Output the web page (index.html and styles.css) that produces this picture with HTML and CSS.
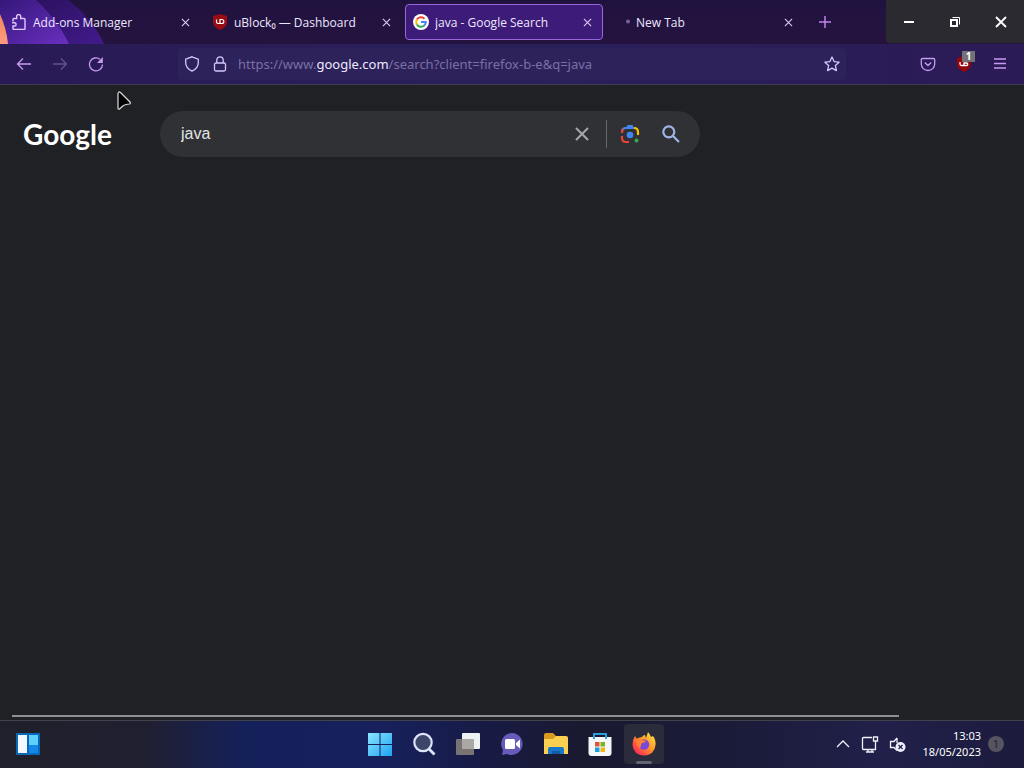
FILE: index.html
```html
<!DOCTYPE html>
<html lang="en">
<head>
<meta charset="utf-8">
<meta name="viewport" content="width=device-width, initial-scale=1">
<title>java - Google Search</title>
<link rel="stylesheet" href="styles.css">
</head>
<body>
<div class="desktop">
  <header class="tabbar">
    <svg class="theme-art" viewBox="0 0 110 44" aria-hidden="true">
      <defs>
        <linearGradient id="art1" x1="0" y1="0" x2="1" y2="1"><stop offset="0" stop-color="#35177a"/><stop offset="1" stop-color="#6a2fc0"/></linearGradient>
        <linearGradient id="art2" x1="0" y1="0" x2="1" y2="1"><stop offset="0" stop-color="#2c1260"/><stop offset="1" stop-color="#421a8c"/></linearGradient>
        <linearGradient id="art3" x1="0" y1="0" x2="0" y2="1"><stop offset="0" stop-color="#f08a5a"/><stop offset="1" stop-color="#ff9a80"/></linearGradient>
      </defs>
      <path d="M36 0h32c15 11 28 26 36 44H60z" fill="url(#art2)"/>
      <path d="M0 0h36c14 13 25 27 33 44H0z" fill="url(#art1)"/>
      <path d="M0 14c4 9 7 19 8 30H0z" fill="url(#art3)"/>
    </svg>
    <div class="tabs">
      <div class="tab">
        <svg class="tab-icon" viewBox="0 0 16 16"><path d="M2 7.500V5.500q0-1 1-1h2.700V2.500a2 2 0 0 1 4 0v2H13q1 0 1 1v9q0 1-1 1H3q-1 0-1-1V12h1.500a1.600 1.600 0 0 0 0-3.200H1.200" fill="none" stroke="#e0c8ff" stroke-width="1.400"/></svg>
        <span class="tab-title">Add-ons Manager</span>
        <button class="tab-close" aria-label="Close Add-ons Manager"><svg viewBox="0 0 10 10"><path d="M1 1l8 8M9 1L1 9"/></svg></button>
      </div>
      <div class="tab">
        <svg class="tab-icon" viewBox="0 0 16 16"><path d="M8 0l7 2v6c0 4-3 6-7 8-4-2-7-4-7-8V2z" fill="#980d13"/><path d="M4.500 5.500v2.300q0 1.700 1.700 1.700H8V5.500h1.800a2 2 0 0 1 0 4H8" fill="none" stroke="#fff" stroke-width="1.200"/></svg>
        <span class="tab-title">uBlock₀ — Dashboard</span>
        <button class="tab-close" aria-label="Close uBlock Dashboard"><svg viewBox="0 0 10 10"><path d="M1 1l8 8M9 1L1 9"/></svg></button>
      </div>
      <div class="tab tab-active">
        <svg class="tab-icon" viewBox="0 0 16 16"><circle cx="8" cy="8" r="8" fill="#fff"/><g fill="none" stroke-width="2"><path d="M11.500 4.700A4.800 4.800 0 0 0 3.900 5.600" stroke="#ea4335"/><path d="M3.900 5.600a4.800 4.800 0 0 0 0 4.800" stroke="#fbbc05"/><path d="M3.900 10.400a4.800 4.800 0 0 0 7.300 1.200" stroke="#34a853"/><path d="M8 8h4.800q0 2.300-1.600 3.600" stroke="#4285f4"/></g></svg>
        <span class="tab-title">java - Google Search</span>
        <button class="tab-close" aria-label="Close Google Search"><svg viewBox="0 0 10 10"><path d="M1 1l8 8M9 1L1 9"/></svg></button>
      </div>
      <div class="tab">
        <svg class="tab-icon" viewBox="0 0 16 16"><circle cx="14" cy="7.500" r="2" fill="#77639b"/></svg>
        <span class="tab-title">New Tab</span>
        <button class="tab-close" aria-label="Close New Tab"><svg viewBox="0 0 10 10"><path d="M1 1l8 8M9 1L1 9"/></svg></button>
      </div>
      <button class="new-tab" aria-label="New tab"><svg viewBox="0 0 12 12"><path d="M6 0v12M0 6h12"/></svg></button>
    </div>
    <div class="window-controls">
      <button aria-label="Minimise"><svg viewBox="0 0 12 12"><path d="M1 6h10" stroke-width="2"/></svg></button>
      <button aria-label="Restore"><svg viewBox="0 0 12 12"><path d="M2 4h6v6H2z" stroke-width="2"/><path d="M3.500 1.500h7v7" stroke-width="1"/></svg></button>
      <button aria-label="Close window"><svg viewBox="0 0 12 12"><path d="M1 1l10 10M11 1L1 11" stroke-width="1.800"/></svg></button>
    </div>
  </header>

  <nav class="toolbar">
    <button class="tool" aria-label="Back"><svg viewBox="0 0 16 16"><path d="M15 8H1.500M7 2.500L1.500 8 7 13.500"/></svg></button>
    <button class="tool tool-off" aria-label="Forward"><svg viewBox="0 0 16 16"><path d="M1 8h13.500M9 2.500L14.500 8 9 13.500"/></svg></button>
    <button class="tool" aria-label="Reload"><svg viewBox="0 0 16 16"><path d="M14.500 8.500A6.500 6.500 0 1 1 12 3.200"/><path d="M14.800 1v6H9z" fill="#c79bf2" stroke="none"/></svg></button>
    <div class="urlbar">
      <button class="url-icon" aria-label="Tracking protection"><svg viewBox="0 0 16 16"><path d="M8 .8l6.300 2.400v3.600c0 4-2.300 6.500-6.300 8.400C4 13.300 1.700 10.800 1.700 6.800V3.200z"/></svg></button>
      <button class="url-icon" aria-label="Connection secure"><svg viewBox="0 0 16 16"><rect x="2.500" y="7" width="11" height="8" rx="1.500"/><path d="M4.800 7V4a3.200 3.200 0 0 1 6.400 0v3"/></svg></button>
      <a class="url" href="#">https://www.<span class="url-host">google.com</span>/search?client=firefox-b-e&amp;q=java</a>
      <button class="url-icon" aria-label="Bookmark"><svg viewBox="0 0 16 16"><path d="M8 1l2.100 4.600 5 .6-3.700 3.400 1 5L8 12.100l-4.400 2.500 1-5L.9 6.200l5-.6z" stroke-linejoin="round"/></svg></button>
    </div>
    <div class="extensions">
      <button class="tool" aria-label="Save to Pocket"><svg viewBox="0 0 16 16"><path d="M2.500 2.500h11q1.200 0 1.200 1.200V8A6.700 6.500 0 0 1 1.300 8V3.700q0-1.200 1.200-1.200zM4.800 6.500L8 9.500l3.200-3"/></svg></button>
      <button class="tool" aria-label="uBlock Origin"><svg viewBox="0 0 16 16"><path d="M8 0l7 2v6c0 4-3 6-7 8-4-2-7-4-7-8V2z" fill="#92060c" stroke="none"/><path d="M4 6v2q0 1.500 1.500 1.500H8V7h2.500a1.200 1.200 0 0 1 0 2.500H8" stroke="#fff"/></svg><span class="badge">1</span></button>
      <button class="tool" aria-label="Menu"><svg viewBox="0 0 16 16"><path d="M2 3h12M2 7.500h12M2 12h12"/></svg></button>
    </div>
  </nav>

  <main class="page">
    <svg class="cursor" viewBox="0 0 16 20" aria-hidden="true"><path d="M2 2.500v15q.5 1.500 2 0l3.500-3q1-.8 6-1.500 1.500-.8.500-2L4.500 1.500Q2.500 0 2 2.500z" fill="#000" stroke="#ddd" stroke-width="1.200"/></svg>
    <div class="search-row">
      <a class="logo" href="#">Google</a>
      <form class="search">
        <input class="search-input" type="text" value="java" aria-label="Search">
        <button class="clear" type="button" aria-label="Clear"><svg viewBox="0 0 14 14"><path d="M1 1l12 12M13 1L1 13" fill="none" stroke="#a3a8ad" stroke-width="2"/></svg></button>
        <button class="lens" type="button" aria-label="Search by image"><svg viewBox="0 0 20 20"><g fill="none" stroke-width="2.200"><path d="M2 8q0-4 4-4h9" stroke="#4285f4"/><path d="M14 4q4 0 4 4v3" stroke="#fbbc04"/><path d="M2 12v2q0 4 4 4h3" stroke="#ea4335"/><path d="M2 9V8q0-2 1-3" stroke="#ea4335"/></g><path d="M6 4l1.500-3h5L14 4z" fill="#4285f4"/><circle cx="10" cy="11" r="3.300" fill="#4285f4"/><circle cx="16.500" cy="16.500" r="2" fill="#34a853"/></svg></button>
        <button class="go" type="submit" aria-label="Google Search"><svg viewBox="0 0 18 18"><g fill="none" stroke="#9fb5e8" stroke-width="2.200"><circle cx="6.800" cy="6.800" r="5.500"/><path d="M11 11l6 6"/></g></svg></button>
      </form>
    </div>
    <hr class="page-rule">
  </main>

  <footer class="taskbar">
    <div class="task-left">
      <button class="app" aria-label="Widgets"><svg viewBox="0 0 24 24"><rect width="24" height="22" y="1" rx="1" fill="#0868b8"/><path d="M2 3h9v18H2z" fill="#f4f7ff"/><path d="M13 3h9v10h-9z" fill="#5fd0fb"/><path d="M13 13h9v8h-9z" fill="#1388e8"/></svg></button>
    </div>
    <div class="task-apps">
      <button class="app" aria-label="Start"><svg viewBox="0 0 24 24"><defs><linearGradient id="win" x1="0" y1="0" x2="1" y2="1"><stop offset="0" stop-color="#8be5ff"/><stop offset="1" stop-color="#1ea4f2"/></linearGradient></defs><path d="M0 1h11.500v11H0zM12.500 1H24v11H12.500zM0 13h11.500v11H0zM12.500 13H24v11H12.500z" fill="url(#win)"/></svg></button>
      <button class="app" aria-label="Search"><svg viewBox="0 0 24 24"><circle cx="11" cy="10.500" r="8.700" fill="#3d4568" stroke="#dde3fb" stroke-width="2.200"/><path d="M17 17l5.500 5.500" stroke="#dde3fb" stroke-width="2.800"/></svg></button>
      <button class="app" aria-label="Task view"><svg viewBox="0 0 24 24"><rect x="6" y="1" width="18" height="16" rx="1" fill="#eef1f2"/><rect y="7" width="18" height="16" rx="1" fill="#777473"/><path d="M6 7h12v10H6z" fill="#aaa9a5"/></svg></button>
      <button class="app" aria-label="Chat"><svg viewBox="0 0 24 24"><path d="M12 1a11 11 0 1 1-5 21l-5 1 1-5A11 11 0 0 1 12 1z" fill="#665bb8"/><rect x="5" y="7" width="10" height="10" rx="1.500" fill="#fff"/><path d="M16 11l4-3.500v9L16 13z" fill="#fff"/></svg></button>
      <button class="app" aria-label="File Explorer"><svg viewBox="0 0 24 24"><path d="M0 3q0-2 2-2h7l3 3v4H0z" fill="#d99a20"/><path d="M0 7h9l3-3h10q2 0 2 2v16H0z" fill="#fbcf50"/><path d="M4 22v-5q0-2 2-2h12q2 0 2 2v5z" fill="#1a78ca"/><path d="M8 19h8v3H8z" fill="#125ba8"/></svg></button>
      <button class="app" aria-label="Microsoft Store"><svg viewBox="0 0 24 24"><path d="M.5 5h23v16q0 3-3 3h-17q-3 0-3-3z" fill="#f5f6fa"/><path d="M6 7V2h12v5" fill="none" stroke="#2a9fdc" stroke-width="2"/><path d="M7 10h4.500v4.500H7z" fill="#e05335"/><path d="M12.500 10H17v4.500h-4.500z" fill="#7bb21e"/><path d="M7 15.500h4.500V20H7z" fill="#179fe0"/><path d="M12.500 15.500H17V20h-4.500z" fill="#f7b51b"/></svg></button>
      <button class="app app-active" aria-label="Firefox"><svg viewBox="0 0 24 24"><defs><linearGradient id="fox" x1="1" y1="0" x2="0" y2="1"><stop offset="0" stop-color="#fff04a"/><stop offset=".45" stop-color="#ff9626"/><stop offset=".8" stop-color="#ff3a50"/><stop offset="1" stop-color="#e62686"/></linearGradient></defs><path d="M3 4l2 3q2-2 5-2 1-2 3-2l1 3 2-6q2 2 3 5l2-1q3 4 2.500 9-1 10-11.500 10.500Q1.500 23 .5 13q-.3-5 2.500-9z" fill="url(#fox)"/><circle cx="12" cy="12.500" r="5.200" fill="#7948d8"/><path d="M4 7q4-2 7 1l3 1q-1 2-4 2-1 1-1 2 0 2-1 3-4-2-4-9z" fill="#ff8030"/></svg></button>
    </div>
    <div class="tray">
      <button class="tray-icon" aria-label="Show hidden icons"><svg viewBox="0 0 18 18"><path d="M3 12l6-6 6 6"/></svg></button>
      <button class="tray-icon" aria-label="Network"><svg viewBox="0 0 18 18"><path d="M11 2.500H2.500q-1 0-1 1v10q0 1 1 1h12V9M5 17h8M7 14.500V17M11 14.500V17M12.500 2h4v4h-4zM14.500 6v8.500"/></svg></button>
      <button class="tray-icon" aria-label="Sound muted"><svg viewBox="0 0 18 18"><path d="M9 3L6 6.500H2.500v6H6l3 3M9 3v5"/><circle cx="12.500" cy="12" r="5" fill="#eef" stroke="none"/><path d="M10.500 10l4 4M14.500 10l-4 4" stroke="#20203d"/></svg></button>
      <div class="clock"><time>13:03</time><time>18/05/2023</time></div>
      <span class="notice">1</span>
    </div>
  </footer>
</div>
</body>
</html>
```
FILE: styles.css
```css
* { box-sizing: border-box; }

body {
  margin: 0;
  background: #202124;
  color: #eee6ff;
  font-family: "Noto Sans", "Open Sans", sans-serif;
  font-size: 12px;
}

button {
  display: flex;
  align-items: center;
  justify-content: center;
  padding: 0;
  border: 0;
  background: none;
  color: inherit;
  font: inherit;
}

svg { display: block; flex: none; }
a { color: inherit; text-decoration: none; }

.desktop {
  display: flex;
  flex-direction: column;
  min-height: 100vh;
}

/* Tab strip */
.tabbar {
  position: relative;
  display: flex;
  justify-content: space-between;
  height: 44px;
  background: linear-gradient(#20123f, #25133f);
}

.theme-art {
  position: absolute;
  top: 0;
  left: 0;
  height: 44px;
}

.tabs {
  position: relative;
  display: flex;
  flex: 1;
  gap: 3px;
  padding: 4px 3px;
}

.tab {
  display: flex;
  flex: 0 1 198px;
  align-items: center;
  min-width: 0;
  padding: 0 7px;
  border: 1px solid transparent;
  border-radius: 4px;
}

.tab-active {
  border-color: #9867dc;
  background: #3d1b78;
}

.tab-icon { width: 16px; height: 16px; }

.tab-title {
  flex: 1;
  overflow: hidden;
  margin-left: 6px;
  font-family: "Open Sans", "Noto Sans", sans-serif;
  white-space: nowrap;
}

.tab-close { width: 16px; height: 20px; }

.tab-close svg {
  width: 9px;
  height: 9px;
  fill: none;
  stroke: #e0c9f8;
  stroke-width: 1.2;
}

.new-tab { width: 36px; }

.new-tab svg {
  width: 12px;
  height: 12px;
  stroke: #c184ef;
  stroke-width: 1.5;
}

.window-controls {
  display: flex;
  height: 43px;
  border-bottom-left-radius: 4px;
  background: #2b2a30;
}

.window-controls button { width: 46px; }

.window-controls svg {
  width: 12px;
  height: 12px;
  fill: none;
  stroke: #fff;
}

/* Navigation toolbar */
.toolbar {
  display: flex;
  align-items: center;
  height: 41px;
  padding: 0 6px;
  border-bottom: 1px solid #403c58;
  background: linear-gradient(90deg, #291a55, #29205a 50%, #2b1a55);
}

.tool {
  position: relative;
  width: 36px;
  height: 32px;
}

.tool svg,
.url-icon svg {
  width: 16px;
  height: 16px;
  fill: none;
  stroke: #c79bf2;
  stroke-width: 1.3;
}

.tool-off { opacity: 0.4; }

.urlbar {
  display: flex;
  flex: 1;
  align-items: center;
  height: 32px;
  margin: 0 64px;
  border-radius: 4px;
  background: #2d225a;
}

.url-icon { width: 28px; height: 32px; }
.url-icon svg { stroke: #d5c6fa; }

.url {
  flex: 1;
  overflow: hidden;
  margin-left: 4px;
  color: #7b70a5;
  font-size: 13px;
  white-space: nowrap;
}

.url-host { color: #f0eaff; }
.extensions { display: flex; }

.badge {
  position: absolute;
  top: 3px;
  right: 7px;
  width: 13px;
  background: #737278;
  color: #fff;
  font-size: 10px;
  font-weight: bold;
  line-height: 11px;
  text-align: center;
}

/* Search page */
.page {
  position: relative;
  display: flex;
  flex: 1;
  flex-direction: column;
  justify-content: space-between;
  padding: 26px 125px 3px 12px;
  background: #202124;
}

.cursor {
  position: absolute;
  top: 6px;
  left: 116px;
  width: 16px;
  height: 20px;
}

.search-row { display: flex; align-items: center; }

.logo {
  flex: none;
  width: 148px;
  padding-left: 11px;
  color: #fff;
  font-family: Lato, sans-serif;
  font-size: 28px;
  font-weight: 700;
  line-height: 46px;
}

.search {
  display: flex;
  flex: 0 1 540px;
  align-items: center;
  height: 46px;
  padding: 0 12px 0 21px;
  border-radius: 23px;
  background: #303134;
}

.search-input {
  flex: 1;
  min-width: 0;
  padding: 0;
  border: 0;
  outline: 0;
  background: none;
  color: #e3e4e6;
  font-family: "Liberation Sans", Arial, sans-serif;
  font-size: 16px;
}

.clear { width: 49px; height: 28px; border-right: 1px solid #64676b; }
.clear svg { width: 14px; height: 14px; }
.lens { width: 46px; height: 40px; }
.lens svg { width: 20px; height: 20px; }
.go { width: 35px; height: 40px; }
.go svg { width: 18px; height: 18px; }

.page-rule {
  width: 100%;
  height: 2px;
  margin: 0;
  border: 0;
  background: #8e8f93;
}

/* Taskbar */
.taskbar {
  display: grid;
  grid-template-columns: 1fr auto 1fr;
  align-items: center;
  height: 48px;
  padding: 0 6px 2px;
  border-top: 1px solid #41424b;
  background: linear-gradient(90deg, #20202b 0, #201f30 14%, #14205a 24%, #17205b 38%, #171b45 47%, #191a30 57%, #1a1b37 70%, #20204a 86%, #1c1b3d);
}

.task-left { display: flex; }
.task-apps { display: flex; gap: 4px; }

.app {
  position: relative;
  width: 40px;
  height: 40px;
  border-radius: 4px;
}

.app svg { width: 24px; height: 24px; }
.task-left .app { width: 44px; }
.app-active { background: #2a2b3b; }

.app-active::after {
  position: absolute;
  bottom: 0;
  left: 12px;
  width: 16px;
  height: 3px;
  border-radius: 2px;
  background: #62646e;
  content: "";
}

.tray {
  display: flex;
  align-items: center;
  justify-content: flex-end;
  padding-right: 14px;
}

.tray-icon { width: 27px; height: 40px; }

.tray-icon svg {
  width: 18px;
  height: 18px;
  fill: none;
  stroke: #f1f0fb;
  stroke-width: 1.3;
}

.clock {
  display: flex;
  flex-direction: column;
  margin: 0 7px 0 12px;
  color: #fff;
  font-size: 11px;
  line-height: 16px;
  text-align: right;
}

.notice {
  width: 16px;
  height: 16px;
  border-radius: 8px;
  background: #55545f;
  color: #24233b;
  font-size: 11px;
  line-height: 16px;
  text-align: center;
}
```
